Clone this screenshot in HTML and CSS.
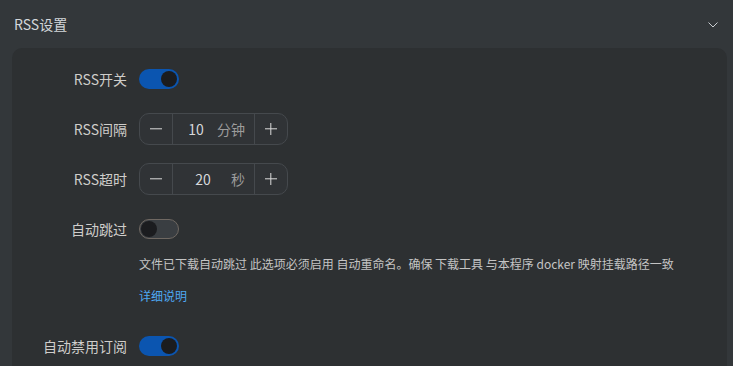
FILE: index.html
```html
<!DOCTYPE html>
<html lang="zh">
<head>
<meta charset="utf-8">
<link rel="stylesheet" href="styles.css">
</head>
<body>
<div class="card">
  <div class="card-header">
    <span class="card-title">RSS设置</span>
    <svg class="chevron" width="10" height="6" viewBox="0 0 10 6"><polyline points="0.5,0.5 5,5 9.5,0.5" fill="none" stroke="#c9cdd1" stroke-width="1"/></svg>
  </div>
  <div class="panel">
    <div class="item">
      <div class="label">RSS开关</div>
      <div class="control"><span class="switch on"><span class="knob"></span></span></div>
    </div>
    <div class="item">
      <div class="label">RSS间隔</div>
      <div class="control">
        <div class="stepper">
          <span class="step minus"></span>
          <span class="value"><span class="num">10</span><span class="suffix">分钟</span></span>
          <span class="step plus"></span>
        </div>
      </div>
    </div>
    <div class="item">
      <div class="label">RSS超时</div>
      <div class="control">
        <div class="stepper">
          <span class="step minus"></span>
          <span class="value"><span class="num">20</span><span class="suffix">秒</span></span>
          <span class="step plus"></span>
        </div>
      </div>
    </div>
    <div class="item item-wide">
      <div class="label">自动跳过</div>
      <div class="control">
        <div class="control-line"><span class="switch off"><span class="knob"></span></span></div>
        <div class="desc">文件已下载自动跳过 此选项必须启用 自动重命名。确保 下载工具 与本程序 docker 映射挂载路径一致</div>
        <a class="link">详细说明</a>
      </div>
    </div>
    <div class="item">
      <div class="label">自动禁用订阅</div>
      <div class="control"><span class="switch on"><span class="knob"></span></span></div>
    </div>
  </div>
</div>
</body>
</html>
```
FILE: styles.css
```css
html, body {
  margin: 0;
  padding: 0;
  background: #33373a;
  height: 366px;
  overflow: hidden;
  font-family: "Noto Sans CJK SC", "Noto Sans", sans-serif;
}
.card {
  padding: 0 6px 0 12px;
}
.card-header {
  height: 48px;
  display: flex;
  align-items: center;
  justify-content: space-between;
  margin-left: -12px;
  padding-left: 14px;
  padding-right: 9px;
}
.card-title {
  font-size: 14px;
  color: #d3d7db;
}
.chevron {
  display: block;
  margin-top: 1px;
}
.panel {
  background: #2d3032;
  border-radius: 10px 10px 0 0;
  padding-top: 15px;
  min-height: 400px;
}
.item {
  display: flex;
  align-items: flex-start;
  margin-bottom: 18px;
}
.item-wide {
  margin-bottom: 24px;
}
.label {
  width: 115px;
  flex: none;
  text-align: right;
  height: 32px;
  line-height: 32px;
  font-size: 14px;
  color: #cfcdca;
  margin-right: 12px;
}
.control {
  display: flex;
  flex-direction: column;
  align-items: flex-start;
  min-height: 32px;
  justify-content: center;
}
.control-line {
  height: 32px;
  display: flex;
  align-items: center;
}
.switch {
  width: 40px;
  height: 20px;
  border-radius: 10px;
  box-sizing: border-box;
  display: flex;
  align-items: center;
  padding: 0 1px;
}
.switch.on {
  background: #0b55b0;
  justify-content: flex-end;
  padding-right: 2px;
}
.switch.off {
  background: #3a3e42;
  border: 1px solid #6f6862;
  padding-left: 1px;
}
.knob {
  width: 16px;
  height: 16px;
  border-radius: 50%;
  background: #1b1c1f;
}
.stepper {
  display: flex;
  width: 149px;
  height: 32px;
  box-sizing: border-box;
  border: 1px solid #45494d;
  border-radius: 10px;
  background: #303336;
}
.step {
  width: 32px;
  flex: none;
  position: relative;
}
.minus {
  border-right: 1px solid #45494d;
}
.plus {
  border-left: 1px solid #45494d;
}
.step::before, .plus::after {
  content: "";
  position: absolute;
  left: 50%;
  top: 50%;
  width: 12px;
  height: 1.4px;
  background: #dcdcdc;
  transform: translate(-50%, -50%);
}
.plus::after {
  width: 1.4px;
  height: 12px;
}
.value {
  flex: 1;
  display: flex;
  align-items: center;
  font-size: 14px;
  padding: 0 9px 0 0;
}
.num {
  flex: 1;
  text-align: center;
  color: #d6d8da;
  padding-left: 2px;
}
.suffix {
  color: #9c9c9c;
}
.desc {
  margin-top: 9px;
  font-size: 12px;
  line-height: 20px;
  color: #c4c4c4;
  white-space: nowrap;
}
.link {
  margin-top: 12px;
  font-size: 12px;
  line-height: 20px;
  color: #4ea8f2;
}
```
